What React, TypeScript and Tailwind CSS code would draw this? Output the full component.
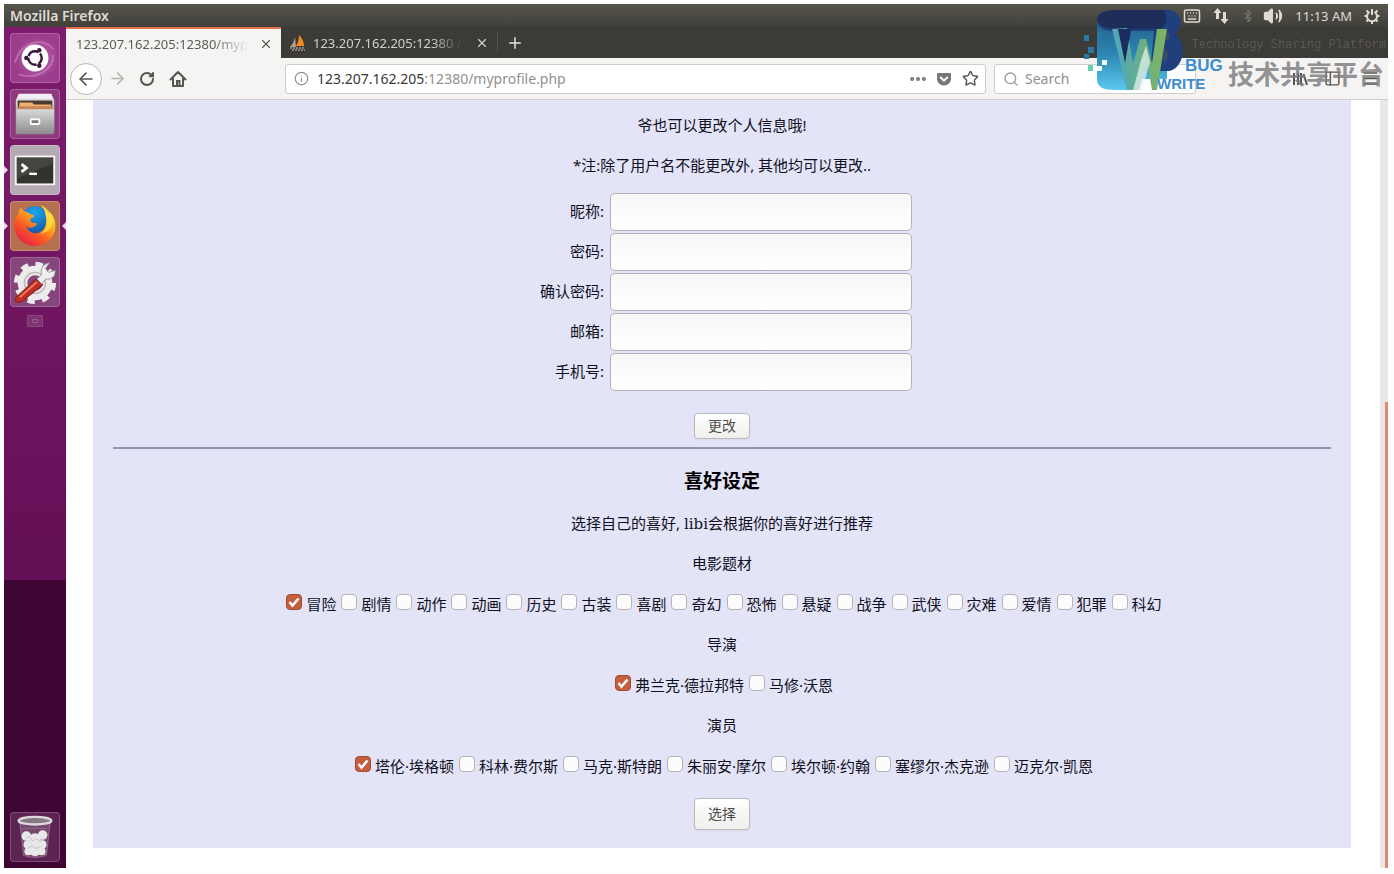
import React from "react";
import {
  ArrowLeft,
  ArrowRight,
  Bluetooth,
  Info,
  Keyboard,
  Menu,
  MoreHorizontal,
  PanelLeft,
  Plus,
  RotateCw,
  Search,
  Star,
  Volume2,
  X,
} from "lucide-react";
import { FaGetPocket } from "react-icons/fa";

const UI = "font-['Noto_Sans','Noto_Sans_CJK_SC',sans-serif]";

const genres = ["冒险", "剧情", "动作", "动画", "历史", "古装", "喜剧", "奇幻", "恐怖", "悬疑", "战争", "武侠", "灾难", "爱情", "犯罪", "科幻"];
const directors = ["弗兰克·德拉邦特", "马修·沃恩"];
const actors = ["塔伦·埃格顿", "科林·费尔斯", "马克·斯特朗", "朱丽安·摩尔", "埃尔顿·约翰", "塞缪尔·杰克逊", "迈克尔·凯恩"];

const fields = [
  { id: "nickname", label: "昵称:", type: "text" },
  { id: "password", label: "密码:", type: "password" },
  { id: "confirm", label: "确认密码:", type: "password" },
  { id: "email", label: "邮箱:", type: "email" },
  { id: "phone", label: "手机号:", type: "tel" },
];

function TopBar() {
  return (
    <header className="flex h-[23px] items-center bg-linear-to-b from-[#57554c] to-[#403f3a] pr-2 pl-1.5 text-[#dfdbd2]">
      <span className="text-[14px] leading-4 font-semibold">Mozilla Firefox</span>
      <div className="ml-auto flex items-center">
        <Keyboard size={18} strokeWidth={2} className="mr-3" />
        <svg width="16" height="16" viewBox="0 0 16 16" fill="currentColor" className="mr-3">
          <path d="M4.5 0 0.5 5h2.5v6h3V5h2.5zM11.5 16l4-5H13V4h-3v7H7.500z" />
        </svg>
        <Bluetooth size={14} className="mr-2 text-[#77756c]" />
        <Volume2 size={20} className="mr-3" fill="currentColor" />
        <span className="mr-3 text-[13px] leading-4">11:13 AM</span>
        <svg width="16" height="16" viewBox="0 0 16 16" fill="none" stroke="currentColor">
          <path d="M5.500 4a5 5 0 1 0 5 0M8 1v6" strokeWidth="2" />
          <path d="M2.500 2.500l2 2M13.500 2.500l-2 2M0.500 8h2.500M13 8h2.500M2.500 13.500l2-2M13.500 13.500l-2-2M8 13v3" strokeWidth="2" />
        </svg>
      </div>
    </header>
  );
}

function UbuntuIcon() {
  return (
    <svg viewBox="0 0 50 50" className="size-full">
      <defs>
        <radialGradient id="swirl">
          <stop offset="0" stopColor="#d583c2" />
          <stop offset="1" stopColor="#a04592" stopOpacity="0.4" />
        </radialGradient>
      </defs>
      <circle cx="27" cy="25" r="22" fill="url(#swirl)" />
      <path d="M4 30C10 8 34 2 44 16M8 42c18 6 36-4 36-20" stroke="#e0a4d2" strokeOpacity=".4" strokeWidth="2" fill="none" />
      <circle cx="25" cy="25" r="14" fill="#fff" />
      <circle cx="25" cy="25" r="7" fill="none" stroke="#3b1838" strokeWidth="2.500" strokeDasharray="12.700 2" strokeDashoffset="5.500" />
      <circle cx="16" cy="25" r="2.300" fill="#3b1838" />
      <circle cx="29.500" cy="17" r="2.300" fill="#3b1838" />
      <circle cx="29.500" cy="33" r="2.300" fill="#3b1838" />
    </svg>
  );
}

function FilesIcon() {
  return (
    <svg viewBox="0 0 50 50" className="size-full">
      <defs>
        <linearGradient id="cab" x1="0" y1="0" x2="0" y2="1">
          <stop offset="0" stopColor="#d9d9da" />
          <stop offset="1" stopColor="#8e8e90" />
        </linearGradient>
      </defs>
      <path d="M8 4h34l3 7H5z" fill="#f1eff3" />
      <rect x="5" y="9" width="40" height="37" rx="2" fill="url(#cab)" />
      <rect x="7" y="11" width="36" height="10" fill="#4c3a30" />
      <path d="M9 13h13l2 2h18v5H8z" fill="#f3ad70" />
      <path d="M8 17h35v4H7z" fill="#c98757" />
      <path d="M6 20h39v25H6z" fill="url(#cab)" />
      <rect x="20.500" y="30.500" width="9" height="5" rx="1" fill="#777" stroke="#fafafa" strokeWidth="2" />
    </svg>
  );
}

function TerminalIcon() {
  return (
    <svg viewBox="0 0 50 50" className="size-full">
      <rect x="4" y="10" width="42" height="31" rx="1" fill="#f5f5f5" />
      <rect x="6" y="12" width="38" height="27" fill="#33322f" />
      <path d="M6 12h38v6L6 34z" fill="#52514d" opacity=".6" />
      <path d="M11 19l5 4-5 4" fill="none" stroke="#fff" strokeWidth="3" />
      <path d="M19 29h8" stroke="#fff" strokeWidth="2.500" />
    </svg>
  );
}

function FirefoxIcon() {
  return (
    <svg viewBox="0 0 50 50" className="size-full">
      <defs>
        <linearGradient id="fox" x1="0.900" y1="0" x2="0.200" y2="1">
          <stop offset="0" stopColor="#fff36a" />
          <stop offset="0.350" stopColor="#ffb11f" />
          <stop offset="0.650" stopColor="#fb5a24" />
          <stop offset="1" stopColor="#e3194f" />
        </linearGradient>
        <radialGradient id="globe" cx="0.500" cy="0.200" r="0.900">
          <stop offset="0" stopColor="#1aa8f0" />
          <stop offset="1" stopColor="#17408f" />
        </radialGradient>
      </defs>
      <circle cx="25" cy="20" r="15.500" fill="url(#globe)" />
      <path
        d="M31 3c3 3 5 6 5 10 2 9 0 16-7 19-7 2-12-2-13-7 3 3 6 2 9 0 2-1 3-3 0-3-4 0-5-2-5-4 2-2 4-2 4-4-3-1-6-2-8-4-2 0-4-1-6-4-2 2-2 4-2 6C4 16 2 22 4 29c2 10 11 17 21 17s19-7 21-17c1-8-1-14-6-19 0 2 0 2-1 3-1-4-4-8-8-10z"
        fill="url(#fox)"
      />
      <path d="M31 3c3 3 5 6 5 10 3 8 1 16-5 20 8-1 13-7 12-15-1-6-4-11-12-15z" fill="#ffe13d" opacity=".75" />
    </svg>
  );
}

function SettingsIcon() {
  return (
    <svg viewBox="0 0 50 50" className="size-full">
      <circle cx="25" cy="26" r="13" fill="none" stroke="#ececec" strokeWidth="10" />
      <circle cx="25" cy="26" r="19" fill="none" stroke="#ececec" strokeWidth="6" strokeDasharray="7.460 7.460" />
      <circle cx="25" cy="26" r="11" fill="none" stroke="#bbb8bb" strokeWidth="1.500" />
      <path d="M5 41l21-19 7 6-21 17c-5 3-10 0-7-4z" fill="#bd2f24" stroke="#7d1b17" />
      <path d="M9 41l18-16" stroke="#ec7860" strokeWidth="2" />
      <path d="M27 22l5-5c-2-6 2-11 8-12l-4 6 3 4 7-2c0 7-5 10-10 9l-4 5z" fill="#eee" stroke="#9b989b" />
    </svg>
  );
}

function TrashIcon() {
  return (
    <svg viewBox="0 0 50 50" className="size-full">
      <path d="M9 8l4 36c5 3 19 3 24 0l4-36z" fill="#d5ccd3" fillOpacity=".22" stroke="#d5ccd3" strokeOpacity=".35" />
      <ellipse cx="25" cy="8" rx="17" ry="4" fill="#857a82" stroke="#dcd8dc" strokeWidth="2.500" />
      <path d="M12 16h26" stroke="#938490" strokeOpacity=".6" />
      <g fill="#e9e8e9">
        <circle cx="16" cy="24" r="5" />
        <circle cx="25" cy="27" r="6" />
        <circle cx="33" cy="23" r="5" />
        <circle cx="18" cy="33" r="5" />
        <circle cx="32" cy="33" r="5" />
        <circle cx="25" cy="33" r="6" />
        <circle cx="25" cy="39" r="6" />
        <circle cx="18" cy="40" r="4" />
        <circle cx="32" cy="40" r="4" />
      </g>
      <path d="M15 27l4-3 3 5 5-2 4 3 4-4M17 37l5-3 4 3 5-2" stroke="#c4c0c4" fill="none" />
    </svg>
  );
}

function Tile({ label, tone, children }: { label: string; tone: string; children: React.ReactNode }) {
  return (
    <button type="button" aria-label={label} className={`size-[50px] shrink-0 rounded-[4px] border border-white/20 ${tone}`}>
      {children}
    </button>
  );
}

function Pip({ flip }: { flip?: boolean }) {
  return (
    <svg viewBox="0 0 4 8" className="h-2 w-1">
      <path d={flip ? "M4 0v8L0 4z" : "M0 0v8l4-4z"} fill="#f0d3ea" />
    </svg>
  );
}

function Launcher() {
  return (
    <nav className="flex w-[62px] shrink-0 flex-col bg-[#3d0633]">
      <div className="flex h-[553px] flex-col items-center gap-1.5 bg-linear-to-b from-[#7e1b6c] to-[#640f56] pt-1.5">
        <Tile label="Search your computer" tone="bg-[#9c3c8d]"><UbuntuIcon /></Tile>
        <Tile label="Files" tone="bg-[#8d3a7f]"><FilesIcon /></Tile>
        <div className="flex w-full items-center justify-between">
          <Pip />
          <Tile label="Terminal" tone="bg-[#b5a9b4]"><TerminalIcon /></Tile>
          <span className="w-1" />
        </div>
        <div className="flex w-full items-center justify-between">
          <Pip />
          <Tile label="Firefox" tone="bg-[#b5714f]"><FirefoxIcon /></Tile>
          <Pip flip />
        </div>
        <Tile label="System settings" tone="bg-[#86457b]"><SettingsIcon /></Tile>
        <span className="mt-0.5 flex h-3 w-4 items-center justify-center border border-[#8a4480] bg-[#7d3572]">
          <span className="h-1 w-1.5 border border-[#97578d]" />
        </span>
      </div>
      <div className="flex flex-1 flex-col items-center justify-end pb-1.5">
        <Tile label="Trash" tone="bg-[#5d2453]"><TrashIcon /></Tile>
      </div>
    </nav>
  );
}

function Tabs() {
  return (
    <div className="flex h-[31px] items-stretch bg-[#3c3b37] text-[13px] leading-5">
      <div className="flex w-[215px] items-center border-t-2 border-[#e0704c] bg-[#f5f4f2] pr-2 pl-2.5 text-[#5b5b58]">
        <a href="#profile" className="whitespace-nowrap mask-r-from-80% mask-r-to-100%">123.207.162.205:12380/myp</a>
        <button type="button" aria-label="Close tab" className="ml-auto"><X size={14} /></button>
      </div>
      <div className="flex w-[216px] items-center pr-2 pl-2 text-[#d2d0ca]">
        <svg width="18" height="18" viewBox="0 0 18 18" className="mr-1.5 shrink-0">
          <path d="M1 13C4 10 5 7 6 3l1 10z" fill="#b9a08a" />
          <path d="M7 12C9 9 10 5 10 1c4 4 5 8 5 11z" fill="#f28a1c" />
          <path d="M1 14h15M3 16h13" stroke="#9a96a0" strokeWidth="1.500" strokeDasharray="2 1" />
        </svg>
        <a href="#admin" className="whitespace-nowrap mask-r-from-80% mask-r-to-100%">123.207.162.205:12380 /</a>
        <button type="button" aria-label="Close tab" className="ml-auto"><X size={14} /></button>
      </div>
      <button type="button" aria-label="New tab" className="my-1.5 border-l border-[#55534d] px-2 text-[#e5e3dd]"><Plus size={18} /></button>
    </div>
  );
}

function Toolbar() {
  return (
    <div className="flex h-[42px] items-center border-b border-[#d0cecb] bg-[#f5f4f2] pr-2 pl-1 text-[#555552]">
      <button type="button" aria-label="Back" className="flex size-8 items-center justify-center rounded-full border border-[#bbb9b5] bg-white"><ArrowLeft size={20} /></button>
      <button type="button" aria-label="Forward" className="ml-1.5 text-[#b7b5b1]"><ArrowRight size={19} /></button>
      <button type="button" aria-label="Reload" className="ml-3"><RotateCw size={16} strokeWidth={3} /></button>
      <button type="button" aria-label="Home" className="ml-3.5">
        <svg width="18" height="18" viewBox="0 0 18 18" fill="none" stroke="currentColor" strokeWidth="2">
          <path d="M1.500 9.500L9 2l7.500 7.500M4 8v8h10V8" strokeLinejoin="round" strokeLinecap="round" />
          <path d="M8 16v-5h2.500v5" />
        </svg>
      </button>
      <div className="ml-[98px] flex h-[30px] flex-1 items-center rounded-[3px] border border-[#cfcdca] bg-white pr-1.5 pl-2">
        <Info size={15} className="mr-2 text-[#92908d]" />
        <a href="#profile" className="flex-1 text-[14px] leading-5 text-[#92908d]">
          <span className="text-[#393936]">123.207.162.205</span>:12380/myprofile.php
        </a>
        <button type="button" aria-label="Page actions"><MoreHorizontal size={20} strokeWidth={3} className="text-[#777]" /></button>
        <button type="button" aria-label="Save to Pocket" className="ml-2"><FaGetPocket size={16} className="text-[#777]" /></button>
        <button type="button" aria-label="Bookmark" className="ml-2.5"><Star size={17} /></button>
      </div>
      <label className="ml-2 flex h-[30px] w-[202px] items-center gap-1.5 rounded-[3px] border border-[#cfcdca] bg-white px-2">
        <Search size={16} className="shrink-0 text-[#999]" />
        <input type="search" aria-label="Search" placeholder="Search" className="w-full min-w-0 bg-transparent text-[14px] leading-5 placeholder:text-[#92908d] focus:outline-none" />
      </label>
      <div className="ml-24 flex items-center gap-4">
        <button type="button" aria-label="Library">
          <svg width="16" height="16" viewBox="0 0 16 16" fill="none" stroke="currentColor" strokeWidth="2">
            <path d="M2 2v12M6 2v12M9 2v12M11.500 3l3.500 11" />
          </svg>
        </button>
        <button type="button" aria-label="Sidebars"><PanelLeft size={17} /></button>
        <button type="button" aria-label="Menu" className="ml-1"><Menu size={19} /></button>
      </div>
    </div>
  );
}

function CheckRow({ items, name }: { items: string[]; name: string }) {
  return (
    <div className="mt-4 flex flex-wrap justify-center gap-x-[5px] pl-1">
      {items.map((item, i) => (
        <label key={item} className="flex h-[25px] items-center gap-1 leading-6">
          <span className="mb-1 grid">
            <input
              type="checkbox"
              name={name}
              defaultChecked={i === 0}
              className="peer size-4 appearance-none rounded-[4px] border border-[#b5b3b5] bg-[#fcfcfc] [grid-area:1/1] checked:border-[#a04c30] checked:bg-[#c4603e]"
            />
            <svg viewBox="0 0 16 16" className="pointer-events-none hidden size-4 [grid-area:1/1] peer-checked:block">
              <path d="M3.500 8l3 3.500 6-7" fill="none" stroke="#fff" strokeWidth="2.500" />
            </svg>
          </span>
          <span>{item}</span>
        </label>
      ))}
    </div>
  );
}

function Profile() {
  return (
    <main className="mr-[29px] ml-[27px] mb-5 flex-1 bg-[#e4e4f9] px-5 pt-[13px] text-center text-[15px] leading-6 text-[#101020]">
      <form onSubmit={(e) => e.preventDefault()}>
        <p>爷也可以更改个人信息哦!</p>
        <p className="mt-4">*注:除了用户名不能更改外, 其他均可以更改..</p>
        <div className="mt-4 flex justify-center pl-2">
          <div className="grid grid-cols-[auto_302px] items-center gap-x-1.5 gap-y-0.5">
            {fields.map((f) => (
              <React.Fragment key={f.id}>
                <label htmlFor={f.id} className="pb-0.5 text-right">{f.label}</label>
                <input
                  id={f.id}
                  type={f.type}
                  className="h-[38px] rounded-[5px] border border-[#b3b1b3] bg-linear-to-b from-[#f7f7f7] to-white px-2"
                />
              </React.Fragment>
            ))}
          </div>
        </div>
        <button type="submit" className="mt-[22px] h-[26px] w-14 rounded-[4px] border border-[#bcbab8] bg-linear-to-b from-white to-[#efefed] text-[14px] leading-5 text-[#4c4c4c] shadow-xs">更改</button>
      </form>
      <hr className="mt-2 border-t-2 border-[#9593ac]" />
      <form onSubmit={(e) => e.preventDefault()}>
        <h3 className="mt-5 text-[19px] leading-6 font-bold text-black">喜好设定</h3>
        <p className="mt-[18px] h-6">选择自己的喜好, <span className="font-['DejaVu_Serif',serif]">libi</span>会根据你的喜好进行推荐</p>
        <p className="mt-4">电影题材</p>
        <CheckRow items={genres} name="genre" />
        <p className="mt-4">导演</p>
        <CheckRow items={directors} name="director" />
        <p className="mt-4">演员</p>
        <CheckRow items={actors} name="actor" />
        <button type="submit" className="mt-5 h-8 w-14 rounded-[4px] border border-[#bcbab8] bg-linear-to-b from-white to-[#efefed] text-[14px] leading-5 text-[#4c4c4c] shadow-xs">选择</button>
      </form>
    </main>
  );
}

function Watermark() {
  return (
    <div className="pointer-events-none absolute top-2 right-1.5 h-24 w-[306px]">
      <svg viewBox="0 0 306 96" className="absolute inset-0 size-full">
        <defs>
          <linearGradient id="can" x1="0" y1="0" x2="0" y2="1">
            <stop offset="0" stopColor="#25608b" />
            <stop offset="0.500" stopColor="#2c87b4" />
            <stop offset="1" stopColor="#5cc8ee" />
          </linearGradient>
          <linearGradient id="ribbon" x1="0" y1="0" x2="1" y2="0">
            <stop offset="0" stopColor="#4ba7c0" />
            <stop offset="1" stopColor="#82b45c" />
          </linearGradient>
        </defs>
        <path d="M15 12c6 8 20 9 40 9h30v50H55l-9 11H32c-10 0-17-3-17-10z" fill="url(#can)" />
        <path d="M50 2h38c12 3 14 17 5 24 12 8 10 34-6 37H68l4-40H30C10 22 10 3 32 2z" fill="#1f3f7d" />
        <path d="M15 12C15 5 22 2 36 2h46c4 8 2 16-4 19H36c-12 0-19-3-21-9z" fill="#1e2d59" />
        <path d="M84 23c5 2 5 8 0 10zM82 40c6 3 5 12-1 14z" fill="#3c4c66" />
        <path d="M36 21l7 34 6-34z" fill="#1b2c5f" />
        <path d="M30 21l15 61h12l8-29 5 29h5l10-61H75l-5 34-6-24h-6l-7 25-6-36z" fill="url(#ribbon)" />
        <path d="M36 21l7 34 6-34z" fill="#1b2c5f" />
        <path d="M51 82l8-30 5-14 4 16-8 28z" fill="#e9f5f4" opacity=".7" />
        <g fill="#2c799f">
          <rect x="2" y="27" width="5" height="6" />
          <rect x="15" y="24" width="5" height="5" />
          <rect x="6" y="39" width="6" height="6" />
          <rect x="2" y="46" width="5" height="5" />
        </g>
        <g fill="#f4fbfc">
          <rect x="20" y="52" width="5" height="5" />
          <rect x="15" y="58" width="5" height="5" />
        </g>
        <rect x="6" y="57" width="5" height="6" fill="#67cfac" />
        <g fontFamily="Liberation Sans, sans-serif" fontWeight="700" fill="#3c8dcc">
          <text x="103" y="63" fontSize="17">BUG</text>
          <text x="75" y="81" fontSize="15">WRITE</text>
        </g>
      </svg>
      <span className="absolute top-[29px] right-0.5 font-['Liberation_Mono',monospace] text-[12px] leading-4 text-[#595854]">Technology Sharing Platform</span>
      <span className="absolute top-[46px] right-1 text-[26px] leading-[40px] font-bold whitespace-nowrap text-[#77777a]/80">技术共享平台</span>
    </div>
  );
}

export default function App() {
  return (
    <div className={`relative flex min-h-screen flex-col bg-[#fefefe] pt-1 pr-1.5 pb-1.5 pl-1 ${UI}`}>
      <TopBar />
      <div className="flex flex-1">
        <Launcher />
        <div className="flex min-w-0 flex-1 flex-col">
          <Tabs />
          <Toolbar />
          <div className="flex flex-1 bg-white">
            <Profile />
            <div className="flex w-2 flex-col items-end bg-[#e9e8e7] pt-[302px]">
              <span className="w-[3px] flex-1 bg-[#dc8a72]" />
            </div>
          </div>
        </div>
      </div>
      <Watermark />
    </div>
  );
}
